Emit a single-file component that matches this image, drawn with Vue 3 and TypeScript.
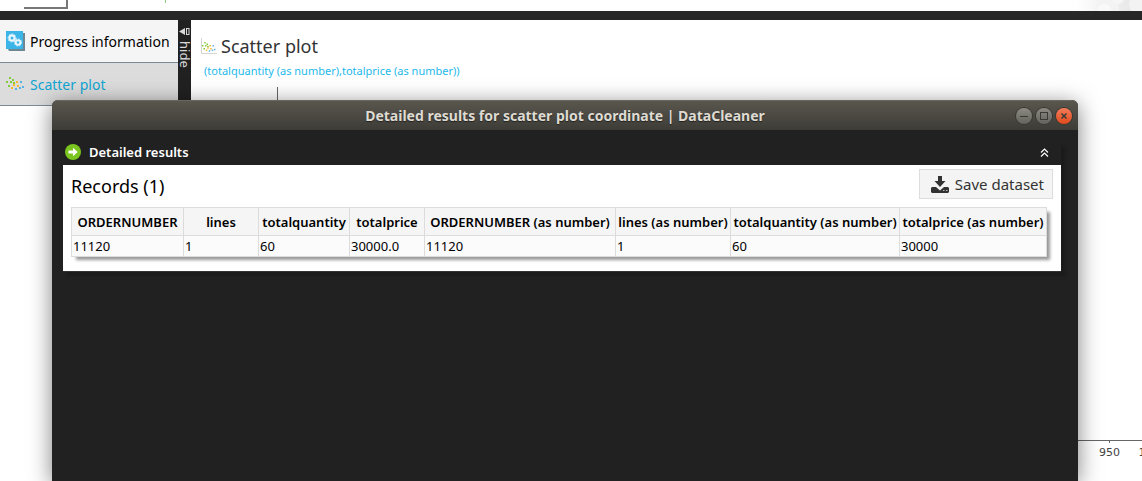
<script setup lang="ts">
interface Column {
  label: string
  value: string
  width: number
}

interface Dot {
  x: number
  y: number
  c: string
}

const columns: Column[] = [
  { label: 'ORDERNUMBER', value: '11120', width: 112 },
  { label: 'lines', value: '1', width: 75 },
  { label: 'totalquantity', value: '60', width: 91 },
  { label: 'totalprice', value: '30000.0', width: 75 },
  { label: 'ORDERNUMBER (as number)', value: '11120', width: 191 },
  { label: 'lines (as number)', value: '1', width: 115 },
  { label: 'totalquantity (as number)', value: '60', width: 169 },
  { label: 'totalprice (as number)', value: '30000', width: 147 },
]

const ticks: string[] = ['950', '1000']

const green = '#84cc38'
const amber = '#fbb829'
const blue = '#58b4e5'

const dots: Dot[] = [
  { x: 3, y: 0, c: green }, { x: 6, y: 2, c: green }, { x: 0, y: 4, c: green },
  { x: 4, y: 4, c: green }, { x: 2, y: 8, c: green }, { x: 7, y: 5, c: green },
  { x: 10, y: 4, c: amber }, { x: 7, y: 7, c: amber }, { x: 11, y: 8, c: amber },
  { x: 5, y: 10, c: amber }, { x: 14, y: 4, c: blue }, { x: 9, y: 11, c: blue },
  { x: 13, y: 10, c: blue }, { x: 16, y: 9, c: blue },
]
</script>

<template>
  <div class="app">
    <header class="banner">
      <span class="corner"></span>
      <span class="mark"></span>
      <svg class="bubbles" width="66" height="11" viewBox="0 0 66 11" aria-hidden="true">
        <defs>
          <linearGradient id="fade">
            <stop offset="0" stop-color="#fff" />
            <stop offset="0.5" stop-color="#f0f0f0" />
            <stop offset="1" stop-color="#e4e4e4" />
          </linearGradient>
        </defs>
        <rect width="66" height="11" fill="url(#fade)" />
        <circle cx="31" cy="10" r="12" fill="#f3f3f3" />
        <circle cx="28" cy="12" r="8" fill="#f9f9f9" />
        <circle cx="42" cy="-2" r="6" fill="#f6f6f6" />
        <circle cx="64" cy="4" r="11" fill="#f3f3f3" />
      </svg>
    </header>

    <div class="body">
      <nav class="side">
        <a class="item" href="#progress">
          <svg width="19" height="20" viewBox="0 0 19 20" aria-hidden="true">
            <path d="M2 2h17v18H3l-1-2z" fill="#6f8790" />
            <rect width="17" height="18" fill="#3bb4e8" />
            <g fill="none" stroke="#e9f7fd">
              <circle cx="6" cy="7" r="2.6" stroke-width="2.2" />
              <circle cx="6" cy="7" r="4" stroke-width="1" stroke-dasharray="1.5 1.5" />
              <circle cx="12" cy="11.500" r="2.300" stroke-width="2" />
              <circle cx="12" cy="11.500" r="3.600" stroke-width="1" stroke-dasharray="1.4 1.400" />
            </g>
          </svg>
          Progress information
        </a>
        <a class="item active" href="#scatter">
          <svg width="19" height="14" viewBox="0 0 19 14" aria-hidden="true">
            <rect v-for="(d, i) in dots" :key="i" :x="d.x" :y="d.y" width="2" height="2" :fill="d.c" />
          </svg>
          Scatter plot
        </a>
      </nav>

      <button class="hide" type="button">
        <svg width="11" height="9" viewBox="0 0 11 9" aria-hidden="true">
          <path d="M0 4.500 6 1v7z" fill="#d8d8d8" />
          <rect x="7.500" y="1.500" width="2.500" height="6" fill="none" stroke="#d8d8d8" />
        </svg>
        <span>hide</span>
      </button>

      <main class="result">
        <h1>
          <svg width="16" height="17" viewBox="0 0 16 17" aria-hidden="true">
            <path d="M.5 0v15.500H16" fill="none" stroke="#d4d4d4" />
            <g transform="translate(1 4) scale(.75)">
              <rect v-for="(d, i) in dots" :key="i" :x="d.x" :y="d.y" width="2" height="2" :fill="d.c" />
            </g>
          </svg>
          Scatter plot
        </h1>
        <p class="subtitle">(totalquantity (as number),totalprice (as number))</p>
        <div class="plot"></div>
        <div class="ticks">
          <span v-for="t in ticks" :key="t">{{ t }}</span>
        </div>
      </main>
    </div>

    <section class="dialog" role="dialog" aria-labelledby="dialog-title">
      <div class="titlebar">
        <h2 id="dialog-title">Detailed results for scatter plot coordinate | DataCleaner</h2>
        <div class="controls">
          <button type="button" aria-label="Minimize">
            <svg width="16" height="16" viewBox="0 0 16 16"><path d="M4 8.500h8" /></svg>
          </button>
          <button type="button" aria-label="Maximize">
            <svg width="16" height="16" viewBox="0 0 16 16"><rect x="4.500" y="4.500" width="7" height="7" /></svg>
          </button>
          <button class="close" type="button" aria-label="Close">
            <svg width="16" height="16" viewBox="0 0 16 16"><path d="m5.500 5.500 5 5m0-5-5 5" /></svg>
          </button>
        </div>
      </div>

      <div class="panel">
        <button class="panel-head" type="button">
          <svg width="16" height="16" viewBox="0 0 16 16" aria-hidden="true">
            <circle cx="8" cy="8" r="8" fill="#7ac51f" />
            <path d="M3.500 6.500H8V3.800L12.700 8 8 12.200V9.500H3.500z" fill="#fff" />
          </svg>
          <span>Detailed results</span>
          <svg class="chevrons" width="9" height="9" viewBox="0 0 9 9" aria-hidden="true">
            <path d="M1 4.500 4.500 1 8 4.500M1 8.500 4.500 5 8 8.500" fill="none" stroke="#fff" stroke-width="1.200" />
          </svg>
        </button>
        <div class="card">
          <div class="toolbar">
            <h3>Records (1)</h3>
            <button class="save" type="button">
              <svg width="18" height="17" viewBox="0 0 18 17" aria-hidden="true">
                <path d="M7 0h4v5h3.500L9 11 3.500 5H7z" fill="#333" />
                <path d="M1 11h4l4 3.500 4-3.500h4l1 1v4l-1 1H1l-1-1v-4z" fill="#333" />
                <path d="M12 14.500h1.500M15 14.500h1.500" stroke="#bbb" />
              </svg>
              Save dataset
            </button>
          </div>
          <table>
            <colgroup>
              <col v-for="c in columns" :key="c.label" :style="{ width: c.width + 'px' }" />
            </colgroup>
            <thead>
              <tr><th v-for="c in columns" :key="c.label" scope="col">{{ c.label }}</th></tr>
            </thead>
            <tbody>
              <tr><td v-for="c in columns" :key="c.label">{{ c.value }}</td></tr>
            </tbody>
          </table>
        </div>
      </div>
    </section>
  </div>
</template>

<style>
body {
  margin: 0;
}
</style>

<style scoped>
.app {
  position: relative;
  display: flex;
  flex-direction: column;
  height: 100vh;
  overflow: hidden;
  background: #fff;
  color: #000;
  font-family: "Noto Sans", "Open Sans", sans-serif;
  font-size: 14px;
}

h1, h2, h3, p {
  margin: 0;
  font-weight: 400;
}

button {
  margin: 0;
  padding: 0;
  border: 0;
  font: inherit;
  color: inherit;
  cursor: pointer;
}

.banner {
  display: flex;
  align-items: flex-start;
  height: 11px;
  border-bottom: 9px solid #272727;
}

.corner {
  width: 42px;
  height: 7px;
  margin-left: 24px;
  border-right: 2px solid #777;
  border-bottom: 2px solid #777;
}

.mark {
  width: 1px;
  height: 3px;
  margin-left: 97px;
  background: #8cc97a;
}

.bubbles {
  margin-left: auto;
}

.body {
  display: flex;
  flex: 1;
  min-height: 0;
}

.side {
  flex: 0 0 178px;
}

.item {
  display: flex;
  align-items: center;
  gap: 5px;
  height: 42px;
  padding-left: 6px;
  border-bottom: 1px solid #7d8b99;
  background: #f5f5f5;
  color: #000;
  text-decoration: none;
  white-space: nowrap;
}

.item.active {
  background: #dcdcdc;
  color: #10a5d3;
}

.hide {
  display: flex;
  flex: 0 0 13px;
  flex-direction: column;
  align-items: center;
  gap: 5px;
  padding-top: 7px;
  background: #212121;
  color: #d8d8d8;
  font-size: 13px;
  line-height: 13px;
}

.hide span {
  writing-mode: vertical-rl;
}

.hide svg {
  flex: none;
}

.result {
  display: flex;
  flex: 1;
  flex-direction: column;
  min-width: 0;
  overflow: hidden;
}

h1 {
  display: flex;
  align-items: center;
  gap: 4px;
  padding: 13px 0 0 10px;
  color: #333;
  font-size: 18px;
  line-height: 26px;
}

.subtitle {
  padding: 4px 0 0 13px;
  color: #1cb8ea;
  font-size: 11px;
  line-height: 16px;
}

.plot {
  flex: 1;
  margin: 8px 0 0 86px;
  border-left: 1px solid #666;
  border-bottom: 1px solid #666;
}

.ticks {
  display: flex;
  justify-content: flex-end;
  height: 40px;
  margin-right: -32px;
  color: #444;
  font: 11px/20px "DejaVu Sans", sans-serif;
}

.ticks span {
  display: flex;
  flex-direction: column;
  align-items: center;
  width: 43px;
}

.ticks span::before {
  width: 1px;
  height: 2px;
  background: #666;
  content: "";
}

.dialog {
  position: absolute;
  inset: 100px 64px 0 52px;
  border-radius: 6px 6px 0 0;
  background: #212121;
  box-shadow: 0 4px 22px rgba(0, 0, 0, 0.5);
}

.titlebar {
  display: flex;
  align-items: center;
  height: 29px;
  padding: 0 6px;
  border-top: 1px solid #6a675e;
  border-radius: 6px 6px 0 0;
  background: linear-gradient(#59564d, #3d3c37);
}

.titlebar h2 {
  flex: 1;
  padding-left: 56px;
  color: #dfdbd2;
  font-size: 14px;
  font-weight: 700;
  text-align: center;
  text-shadow: 0 1px 1px #222;
}

.controls {
  display: flex;
  gap: 4px;
}

.controls button {
  display: flex;
  width: 16px;
  height: 16px;
  border-radius: 50%;
  background: linear-gradient(#8b8982, #65635d);
  box-shadow: 0 0 0 1px #3a3934;
}

.controls svg {
  fill: none;
  stroke: #3a3934;
}

.controls .close {
  background: linear-gradient(#f47c59, #df4a1c);
}

.controls .close svg {
  stroke-width: 1.5;
}

.panel {
  margin: 13px 17px 0 11px;
  box-shadow: 4px 4px 3px #1b1b1b;
}

.panel-head {
  display: flex;
  align-items: center;
  gap: 8px;
  width: 100%;
  height: 22px;
  padding: 0 12px 4px 2px;
  background: transparent;
  color: #fff;
  font-size: 13px;
  font-weight: 600;
}

.chevrons {
  margin-left: auto;
}

.card {
  padding: 4px 8px 14px;
  border-bottom: 1px solid #333;
  background: #fff;
}

.toolbar {
  display: flex;
  align-items: flex-start;
  justify-content: space-between;
  height: 38px;
}

h3 {
  font-size: 18px;
  line-height: 34px;
}

.save {
  display: flex;
  align-items: center;
  gap: 6px;
  height: 30px;
  padding: 0 8px 0 11px;
  border: 1px solid #ddd;
  background: #f4f4f4;
  color: #333;
  font-size: 15px;
}

table {
  width: calc(100% - 6px);
  border-collapse: collapse;
  table-layout: fixed;
  box-shadow: 4px 4px 3px -1px #999;
  font-size: 13px;
}

th, td {
  padding: 0;
  border: 1px solid #dcdcdc;
  white-space: nowrap;
}

th {
  height: 27px;
  background: #f5f5f5;
  font-weight: 600;
}

td {
  height: 20px;
  padding-left: 1px;
  background: #fbfbfb;
}
</style>
